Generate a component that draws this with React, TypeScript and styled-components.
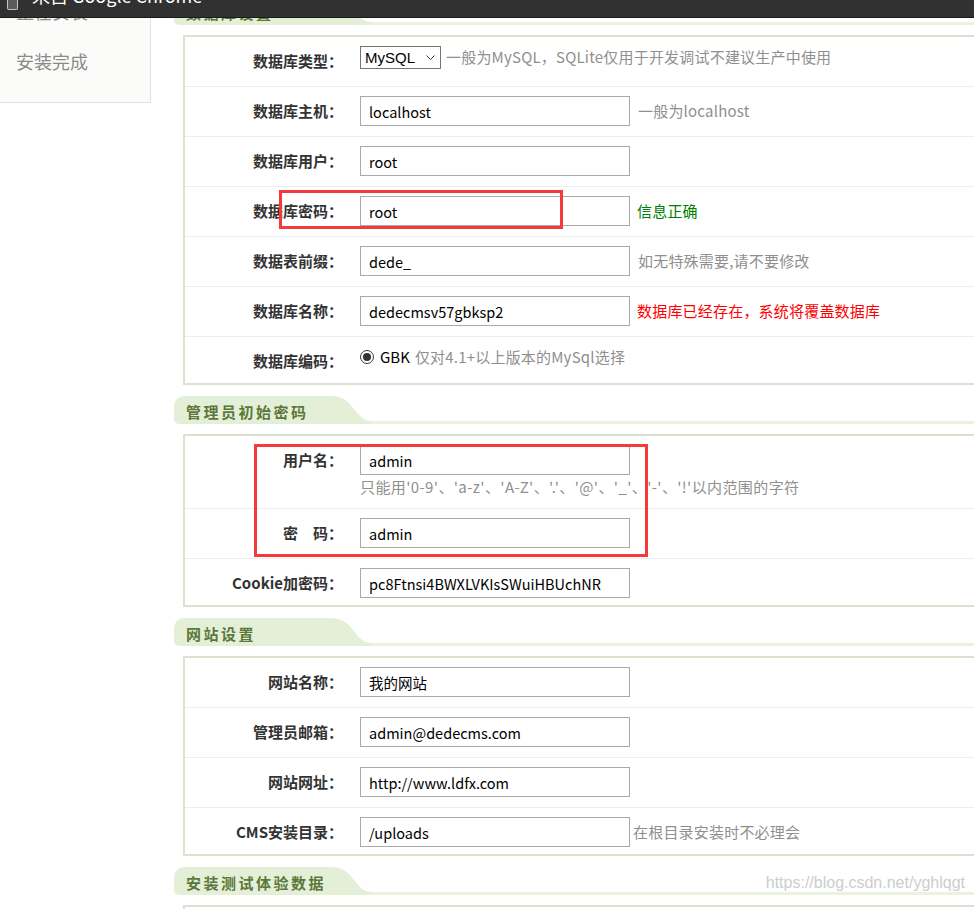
import React from "react";
import styled, { createGlobalStyle } from "styled-components";

const GlobalStyle = createGlobalStyle`
  html, body {
    margin: 0;
    padding: 0;
    background: #fff;
    overflow: hidden;
  }
  body {
    font-family: "Noto Sans CJK SC", "Noto Sans", sans-serif;
    font-size: 15px;
    color: #333;
  }
`;

const Page = styled.div`
  position: relative;
  width: 974px;
  height: 909px;
  overflow: hidden;
  display: flex;
  align-items: flex-start;
`;

// chrome notification bubble, only its bottom edge is visible
const Notice = styled.div`
  position: absolute;
  top: 0;
  left: 0;
  right: 0;
  height: 17px;
  padding-left: 7px;
  display: flex;
  align-items: flex-start;
  gap: 14px;
  background: #313131;
  border-bottom: 1px solid #1b1b1b;
  overflow: hidden;
  z-index: 5;
`;

const NoticeIcon = styled.span`
  flex: none;
  width: 11px;
  height: 10px;
  box-sizing: border-box;
  border: 1px solid #c4c4c4;
  border-top: 0;
  border-radius: 0 0 2px 2px;
  background: #5a5a5a;
`;

const NoticeText = styled.span`
  margin-top: -15px;
  color: #fff;
  font-size: 18px;
  line-height: 20px;
  white-space: nowrap;
`;

const Side = styled.aside`
  flex: none;
  width: 151px;
  box-sizing: border-box;
  margin-top: -164px;
  padding-bottom: 16px;
  background: #fbfcf9;
  border-right: 1px solid #dfe6d7;
  border-bottom: 1px solid #dfe6d7;
`;

const Step = styled.div<{ $on?: boolean }>`
  height: 50px;
  line-height: 50px;
  padding-left: 16px;
  font-size: 18px;
  color: ${({ $on }) => ($on ? "#5b783a" : "#8a8a8a")};
`;

const Main = styled.main`
  flex: none;
  width: 830px;
  margin: -3px 0 0 23px;
`;

const SectionHead = styled.div`
  display: flex;
  align-items: flex-end;
  height: 28px;
`;

const Tab = styled.div`
  position: relative;
  flex: none;
  width: 144px;
  height: 28px;
  padding-left: 12px;
  background: #e4efd7;
  border-radius: 10px 0 0 5px;
  color: #5b783a;
  font-size: 15px;
  font-weight: 700;
  letter-spacing: 2.5px;
  line-height: 31px;
  white-space: nowrap;
  &::after {
    content: "";
    position: absolute;
    left: 100%;
    top: 0;
    width: 42px;
    height: 28px;
    background: inherit;
    clip-path: path("M0 0 C14 0 18 6 24 13 C30 21 34 25 42 25 L42 28 L0 28 Z");
  }
`;

const Rule = styled.div`
  flex: 1;
  height: 3px;
  background: #e9f3df;
`;

const Box = styled.div`
  margin: 10px 0 11px 9px;
  border: 2px solid #dae2d2;
  background: #fff;
`;

const Row = styled.div`
  display: grid;
  grid-template-columns: 158px 1fr;
  column-gap: 17px;
  padding: 9px 0 10px;
  border-bottom: 1px solid #eeeeee;
  &:last-child {
    border-bottom: 0;
    padding-bottom: 7px;
  }
`;

const Label = styled.div`
  text-align: right;
  font-weight: 700;
  line-height: 30px;
  color: #333;
  white-space: nowrap;
`;

const Field = styled.div<{ $top?: boolean }>`
  display: flex;
  align-items: ${({ $top }) => ($top ? "flex-start" : "center")};
  min-height: 30px;
  line-height: ${({ $top }) => ($top ? "22px" : "30px")};
  white-space: nowrap;
`;

const Stack = styled.div`
  display: flex;
  flex-direction: column;
`;

const TextInput = styled.input`
  width: 270px;
  height: 30px;
  box-sizing: border-box;
  padding: 0 8px;
  border: 1px solid #a9a9a9;
  border-radius: 0;
  outline: none;
  font-family: inherit;
  font-size: 14.5px;
  color: #000;
  background: #fff;
`;

const SelectWrap = styled.span`
  position: relative;
  display: inline-block;
  flex: none;
`;

const Select = styled.select`
  appearance: none;
  width: 81px;
  height: 23px;
  box-sizing: border-box;
  padding: 0 0 0 4px;
  border: 1px solid #767676;
  border-radius: 0;
  background: #fff;
  font-family: "Liberation Sans", Arial, sans-serif;
  font-size: 15px;
  color: #000;
`;

const Chevron = styled.svg`
  position: absolute;
  right: 6px;
  top: 9px;
  pointer-events: none;
`;

const Hint = styled.span<{ $tone?: "gray" | "green" | "red"; $gap?: number }>`
  margin-left: ${({ $gap }) => $gap ?? 8}px;
  letter-spacing: 0.2px;
  color: ${({ $tone }) =>
    $tone === "green" ? "#008000" : $tone === "red" ? "#ff0000" : "#8f8f8f"};
`;

const Below = styled.div`
  margin-top: 1px;
  line-height: 22px;
  letter-spacing: 0.4px;
  color: #8f8f8f;
`;

const Radio = styled.span`
  flex: none;
  width: 14px;
  height: 14px;
  margin: 4px 6px 0 0;
  box-sizing: border-box;
  border: 1px solid #3a3a3a;
  border-radius: 50%;
  display: inline-flex;
  align-items: center;
  justify-content: center;
  &::after {
    content: "";
    width: 8px;
    height: 8px;
    border-radius: 50%;
    background: #333;
  }
`;

const Plain = styled.span`
  color: #000;
`;

const Mark = styled.div<{ $x: number; $y: number; $w: number; $h: number }>`
  position: absolute;
  left: ${({ $x }) => $x}px;
  top: ${({ $y }) => $y}px;
  width: ${({ $w }) => $w}px;
  height: ${({ $h }) => $h}px;
  box-sizing: border-box;
  border: 3px solid #f33b3b;
  pointer-events: none;
`;

const Watermark = styled.div`
  position: absolute;
  right: 9px;
  top: 874px;
  font-family: "Liberation Sans", Arial, sans-serif;
  font-size: 16px;
  color: #cdcdcd;
  text-shadow: 0 0 1px #fff;
  pointer-events: none;
`;

type Item = {
  label: string;
  value?: string;
  hint?: string;
  tone?: "gray" | "green" | "red";
  gap?: number;
  kind?: "select" | "radio";
  below?: string;
};

const sections: { title: string; items: Item[] }[] = [
  {
    title: "数据库设置",
    items: [
      { label: "数据库类型：", kind: "select", value: "MySQL", hint: "一般为MySQL，SQLite仅用于开发调试不建议生产中使用", gap: 5 },
      { label: "数据库主机：", value: "localhost", hint: "一般为localhost" },
      { label: "数据库用户：", value: "root" },
      { label: "数据库密码：", value: "root", hint: "信息正确", tone: "green", gap: 7 },
      { label: "数据表前缀：", value: "dede_", hint: "如无特殊需要,请不要修改" },
      { label: "数据库名称：", value: "dedecmsv57gbksp2", hint: "数据库已经存在，系统将覆盖数据库", tone: "red", gap: 7 },
      { label: "数据库编码：", kind: "radio", value: "GBK", hint: "仅对4.1+以上版本的MySql选择", gap: 5 },
    ],
  },
  {
    title: "管理员初始密码",
    items: [
      { label: "用户名：", value: "admin", below: "只能用'0-9'、'a-z'、'A-Z'、'.'、'@'、'_'、'-'、'!'以内范围的字符" },
      { label: "密　码：", value: "admin" },
      { label: "Cookie加密码：", value: "pc8Ftnsi4BWXLVKIsSWuiHBUchNR" },
    ],
  },
  {
    title: "网站设置",
    items: [
      { label: "网站名称：", value: "我的网站" },
      { label: "管理员邮箱：", value: "admin@dedecms.com" },
      { label: "网站网址：", value: "http://www.ldfx.com" },
      { label: "CMS安装目录：", value: "/uploads", hint: "在根目录安装时不必理会", gap: 3 },
    ],
  },
  {
    title: "安装测试体验数据",
    items: [{ label: "初始化数据：", kind: "radio", value: "安装", hint: "" }],
  },
];

const steps = ["许可协议", "环境检测", "参数配置", "正在安装", "安装完成"];

const FieldBody = ({ item }: { item: Item }) => {
  if (item.kind === "select") {
    return (
      <Field $top>
        <SelectWrap>
          <Select defaultValue="mysql">
            <option value="mysql">MySQL</option>
            <option value="sqlite">SQLite</option>
          </Select>
          <Chevron width="9" height="5" viewBox="0 0 9 5">
            <polyline points="0.5,0.5 4.5,4.5 8.5,0.5" fill="none" stroke="#333" strokeWidth="1" />
          </Chevron>
        </SelectWrap>
        <Hint $gap={item.gap}>{item.hint}</Hint>
      </Field>
    );
  }
  if (item.kind === "radio") {
    return (
      <Field $top>
        <Radio />
        <Plain>{item.value}</Plain>
        <Hint $gap={item.gap}>{item.hint}</Hint>
      </Field>
    );
  }
  if (item.below) {
    return (
      <Stack>
        <TextInput readOnly defaultValue={item.value} />
        <Below>{item.below}</Below>
      </Stack>
    );
  }
  return (
    <Field>
      <TextInput readOnly defaultValue={item.value} />
      {item.hint && (
        <Hint $tone={item.tone} $gap={item.gap}>
          {item.hint}
        </Hint>
      )}
    </Field>
  );
};

const App = () => {
  return (
    <Page>
      <GlobalStyle />
      <Side>
        {steps.map((s, i) => (
          <Step key={s} $on={i === 2}>
            {s}
          </Step>
        ))}
      </Side>
      <Main>
        {sections.map((sec) => (
          <section key={sec.title}>
            <SectionHead>
              <Tab>{sec.title}</Tab>
              <Rule />
            </SectionHead>
            <Box>
              {sec.items.map((item) => (
                <Row key={item.label}>
                  <Label>{item.label}</Label>
                  <FieldBody item={item} />
                </Row>
              ))}
            </Box>
          </section>
        ))}
      </Main>
      <Mark $x={279} $y={190} $w={284} $h={39} />
      <Mark $x={254} $y={444} $w={394} $h={113} />
      <Watermark>https://blog.csdn.net/yghlqgt</Watermark>
      <Notice>
        <NoticeIcon />
        <NoticeText>来自 Google Chrome</NoticeText>
      </Notice>
    </Page>
  );
};

export default App;
